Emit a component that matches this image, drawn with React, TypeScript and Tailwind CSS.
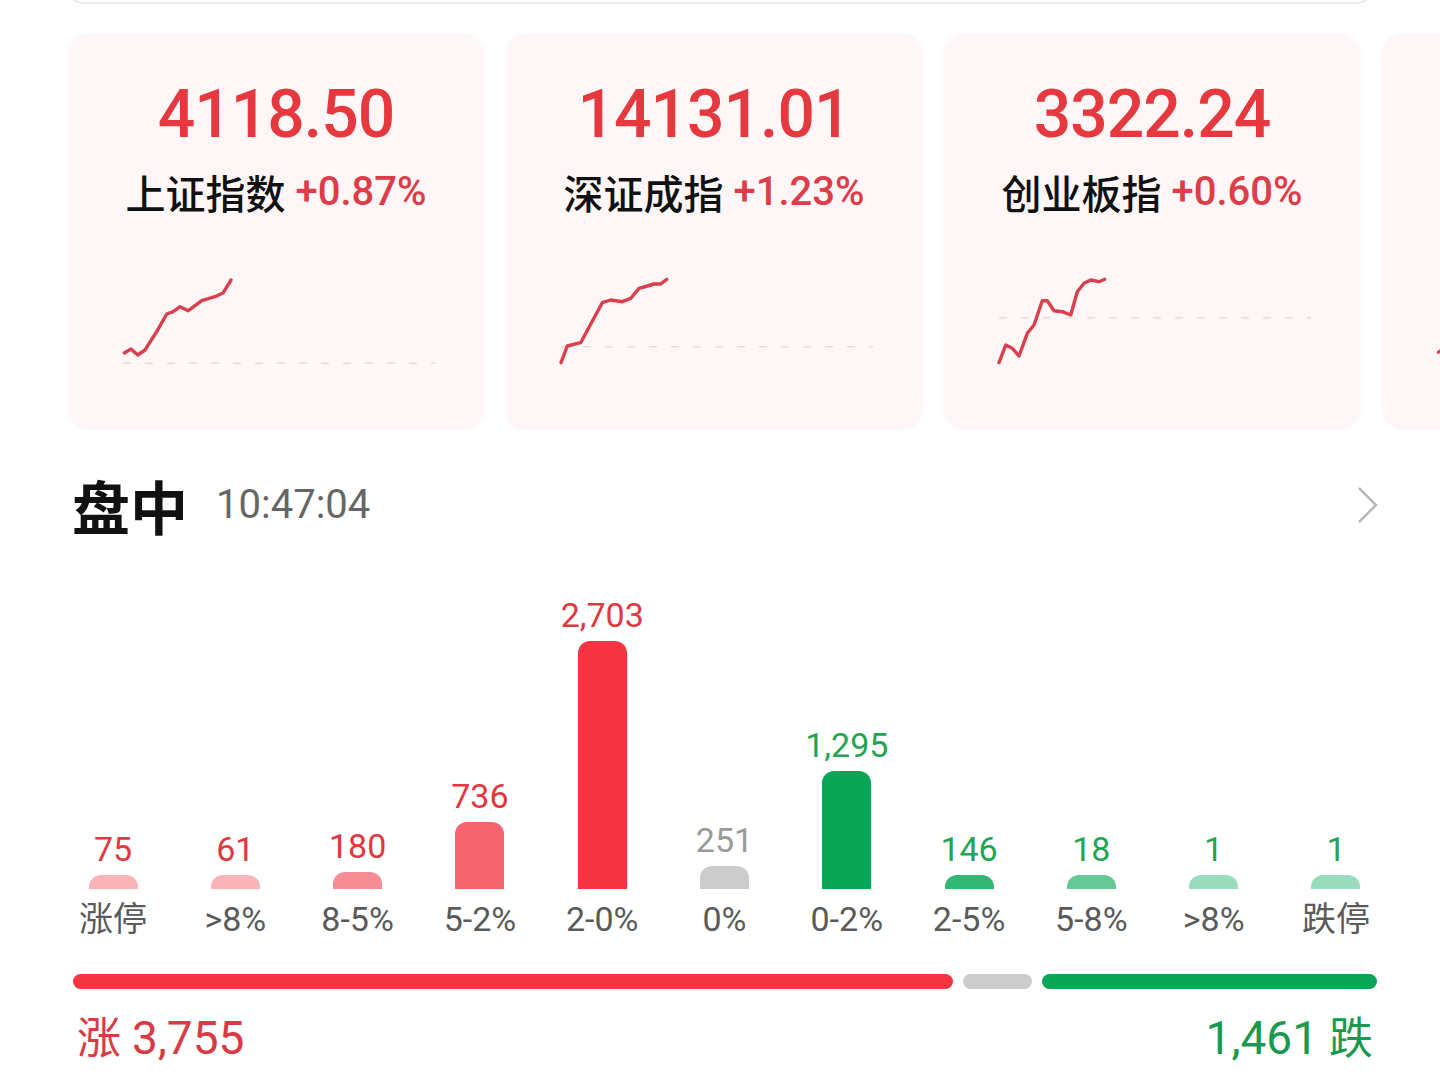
import React from "react";

type Card = {
  value: string;
  name: string;
  change: string;
  line: string;
  base: number;
};

const cards: Card[] = [
  {
    value: "4118.50",
    name: "上证指数",
    change: "+0.87%",
    line: "1.3,83 8,79 14.7,85 22,80 33.7,61.7 43.7,44 50.3,41.7 57,36.7 65.3,40.7 78.7,30.7 92,26.7 100.3,22.7 108,10",
    base: 93.3,
  },
  {
    value: "14131.01",
    name: "深证成指",
    change: "+1.23%",
    line: "0,92.7 6.3,76 19.7,72.7 28,57.3 41.3,32.7 49.7,30 61.3,31.7 69.7,28.3 78,18.3 86.3,16 93,14 99.7,14 105.7,9.3",
    base: 76.7,
  },
  {
    value: "3322.24",
    name: "创业板指",
    change: "+0.60%",
    line: "0,92.7 6.7,75 13.3,78.3 20,86 28.3,63.3 35,55 43.3,30.7 48.3,30.7 55,40.7 63.3,41.7 71.7,45 78.3,21.7 85,13.3 91.7,10 100,11.7 105.7,9.3",
    base: 47.7,
  },
];

const bars = [
  { label: "涨停", count: "75", h: 14, bar: "bg-[#f9b3b9]", text: "text-[#e0383f]" },
  { label: ">8%", count: "61", h: 14, bar: "bg-[#f9b3b9]", text: "text-[#e0383f]" },
  { label: "8-5%", count: "180", h: 17, bar: "bg-[#f68d96]", text: "text-[#e0383f]" },
  { label: "5-2%", count: "736", h: 67, bar: "bg-[#f5636e]", text: "text-[#e0383f]" },
  { label: "2-0%", count: "2,703", h: 248, bar: "bg-[#f53642]", text: "text-[#e0383f]" },
  { label: "0%", count: "251", h: 23, bar: "bg-[#cccccc]", text: "text-[#9a9a9a]" },
  { label: "0-2%", count: "1,295", h: 118, bar: "bg-[#08a656]", text: "text-[#22a552]" },
  { label: "2-5%", count: "146", h: 14, bar: "bg-[#32b775]", text: "text-[#22a552]" },
  { label: "5-8%", count: "18", h: 14, bar: "bg-[#66c897]", text: "text-[#22a552]" },
  { label: ">8%", count: "1", h: 14, bar: "bg-[#98dbbd]", text: "text-[#22a552]" },
  { label: "跌停", count: "1", h: 14, bar: "bg-[#98dbbd]", text: "text-[#22a552]" },
];

function Sparkline({ line, base }: { line: string; base: number }) {
  return (
    <svg width="312" height="100" viewBox="0 0 312 100" className="overflow-visible">
      <line x1="0" y1={base} x2="312" y2={base} stroke="#e2dede" strokeWidth="1.5" strokeDasharray="8 14" />
      <polyline points={line} fill="none" stroke="#d9404b" strokeWidth="3.4" strokeLinejoin="round" strokeLinecap="round" />
    </svg>
  );
}

export default function App() {
  return (
    <div className="w-[1440px] h-[1080px] overflow-hidden bg-white font-[Roboto,'Noto_Sans_CJK_SC',sans-serif]">
      {/* search box edge peeking in from above */}
      <div className="h-[40px] -mt-[36px] mx-[64px] rounded-[24px] border-2 border-[#ebebeb]" />

      {/* ─── Index cards ─── */}
      <div className="flex gap-[22px] pl-[68px] mt-[29px] overflow-hidden">
        {cards.map((c) => (
          <div
            key={c.name}
            className="w-[416px] h-[397px] shrink-0 rounded-[22px] bg-[#fff7f7] shadow-[0_0_6px_rgba(0,0,0,0.03)] flex flex-col items-center pt-[49px]"
          >
            <div className="text-[66px] leading-none font-medium tracking-[-1px] text-[#e5383f]">{c.value}</div>
            <div className="mt-[24px] flex items-center gap-[10px] leading-none">
              <span className="text-[40px] font-medium text-[#111] font-['Noto_Sans_CJK_SC',sans-serif]">{c.name}</span>
              <span className="text-[40px] font-medium text-[#dc3d48]">{c.change}</span>
            </div>
            <div className="mt-[58px] self-start ml-[55px]">
              <Sparkline line={c.line} base={c.base} />
            </div>
          </div>
        ))}
        <div className="w-[416px] h-[397px] shrink-0 rounded-[22px] bg-[#fff7f7] flex flex-col pt-[237px] pl-[55px]">
          <svg width="40" height="100" viewBox="0 0 40 100">
            <polyline points="0,83 8,78" fill="none" stroke="#d9404b" strokeWidth="3" />
          </svg>
        </div>
      </div>

      {/* ─── Header ─── */}
      <div className="flex items-center justify-between pl-[72px] pr-[61px] mt-[45px] h-[60px]">
        <div className="flex items-center gap-[28px]">
          <span className="text-[58px] leading-none font-bold text-[#111] font-['Noto_Sans_CJK_SC',sans-serif]">盘中</span>
          <span className="text-[40px] leading-none text-[#666]">10:47:04</span>
        </div>
        <svg width="22" height="38" viewBox="0 0 22 38">
          <polyline points="2,2 19,19 2,36" fill="none" stroke="#b8b8b8" strokeWidth="2.5" />
        </svg>
      </div>

      {/* ─── Distribution bars ─── */}
      <div className="flex items-end justify-between pl-[72px] pr-[63px] mt-[63px]">
        {bars.map((b, i) => (
          <div key={i} className="w-[82px] flex flex-col items-center">
            <span className={`text-[34px] leading-none ${b.text}`}>{b.count}</span>
            <div className={`mt-[9px] w-[49px] rounded-t-[12px] ${b.bar}`} style={{ height: b.h }} />
            <span className="mt-[13px] text-[34px] leading-none text-[#5a5a5a]">{b.label}</span>
          </div>
        ))}
      </div>

      {/* ─── Up / down ratio ─── */}
      <div className="flex gap-[10px] pl-[73px] pr-[63px] mt-[38px]">
        <div className="w-[880px] h-[15px] rounded-full bg-[#f53642]" />
        <div className="w-[69px] h-[15px] rounded-full bg-[#cccccc]" />
        <div className="flex-1 h-[15px] rounded-full bg-[#08a656]" />
      </div>
      <div className="flex justify-between pl-[77px] pr-[67px] mt-[26px] leading-none">
        <span className="text-[44px] text-[#d93a44]">
          涨 <span className="text-[46px]">3,755</span>
        </span>
        <span className="text-[44px] text-[#17994f]">
          <span className="text-[46px]">1,461</span> 跌
        </span>
      </div>
    </div>
  );
}
